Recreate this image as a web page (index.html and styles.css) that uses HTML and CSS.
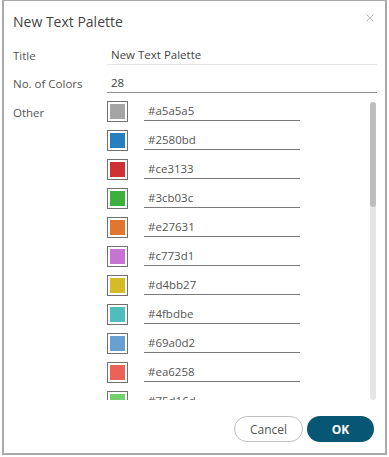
FILE: index.html
```html
<!DOCTYPE html>
<html>
<head>
<meta charset="utf-8">
<link rel="stylesheet" href="styles.css">
</head>
<body>
<div class="dialog">
  <div class="header">
    <span class="title">New Text Palette</span>
    <svg class="close" width="8" height="8" viewBox="0 0 8 8"><path d="M0.5 0.5 L7.5 7.5 M7.5 0.5 L0.5 7.5" stroke="#b8b8b8" stroke-width="1" fill="none"/></svg>
  </div>
  <div class="field field-title">
    <label class="label">Title</label>
    <div class="input input-light">New Text Palette</div>
  </div>
  <div class="field field-count">
    <label class="label">No. of Colors</label>
    <div class="input input-dark">28</div>
  </div>
  <div class="field field-other">
    <label class="label label-other">Other</label>
    <div class="colors-wrap">
      <div class="colors">
        <div class="crow"><span class="swatch"><i style="background:#a5a5a5"></i></span><span class="hex">#a5a5a5</span></div>
        <div class="crow"><span class="swatch"><i style="background:#2580bd"></i></span><span class="hex">#2580bd</span></div>
        <div class="crow"><span class="swatch"><i style="background:#ce3133"></i></span><span class="hex">#ce3133</span></div>
        <div class="crow"><span class="swatch"><i style="background:#3cb03c"></i></span><span class="hex">#3cb03c</span></div>
        <div class="crow"><span class="swatch"><i style="background:#e27631"></i></span><span class="hex">#e27631</span></div>
        <div class="crow"><span class="swatch"><i style="background:#c773d1"></i></span><span class="hex">#c773d1</span></div>
        <div class="crow"><span class="swatch"><i style="background:#d4bb27"></i></span><span class="hex">#d4bb27</span></div>
        <div class="crow"><span class="swatch"><i style="background:#4fbdbe"></i></span><span class="hex">#4fbdbe</span></div>
        <div class="crow"><span class="swatch"><i style="background:#69a0d2"></i></span><span class="hex">#69a0d2</span></div>
        <div class="crow"><span class="swatch"><i style="background:#ea6258"></i></span><span class="hex">#ea6258</span></div>
        <div class="crow"><span class="swatch"><i style="background:#75d16d"></i></span><span class="hex">#75d16d</span></div>
      </div>
      <div class="scrollbar"><div class="thumb"></div></div>
    </div>
  </div>
  <div class="footer">
    <button class="btn btn-cancel">Cancel</button>
    <button class="btn btn-ok">OK</button>
  </div>
</div>
</body>
</html>
```

FILE: styles.css
```css
* { box-sizing: border-box; }
html, body { margin: 0; padding: 0; background: #fff; }
body {
  font-family: "Open Sans", "Liberation Sans", sans-serif;
  color: #555;
  padding-left: 2px;
}
.dialog {
  width: 385px;
  height: 455px;
  border: 2px solid #a9a9a9;
  border-top-width: 1px;
  display: flex;
  flex-direction: column;
  background: #fff;
}
.header {
  height: 42px;
  display: flex;
  align-items: flex-start;
  justify-content: space-between;
  padding: 11px 11px 0 9px;
}
.title {
  font-size: 14px;
  line-height: 20px;
  color: #444;
}
.close { margin-top: 2px; }
.field {
  display: grid;
  grid-template-columns: 94px 1fr;
  padding: 0 8px 0 9px;
  align-items: end;
}
.label {
  font-size: 11.5px;
  color: #555;
  line-height: 19px;
}
.input {
  font-size: 11.5px;
  color: #444;
  padding-left: 4px;
  padding-top: 2px;
  line-height: 19px;
}
.field-title .input { height: 22px; border-bottom: 1px solid #e4e4e4; }
.field-count { margin-top: 7px; }
.field-count .input { height: 21px; border-bottom: 1px solid #8c8c8c; padding-top: 1px; }
.field-other {
  margin-top: 7px;
  align-items: start;
  padding-right: 9px;
}
.label-other { padding-top: 3px; }
.colors-wrap {
  position: relative;
  height: 300px;
}
.colors {
  height: 100%;
  overflow: hidden;
  padding-top: 1px;
}
.scrollbar {
  position: absolute;
  right: 0;
  top: 2px;
  bottom: 0;
  width: 6px;
  background: #e6e6e6;
  border-radius: 3px;
}
.thumb {
  height: 105px;
  background: #bdbdbd;
  border-radius: 3px;
}
.crow {
  display: flex;
  align-items: flex-start;
  height: 29px;
}
.swatch {
  width: 21px;
  height: 21px;
  border: 1px solid #707070;
  padding: 2px;
  background: #fff;
  display: block;
  flex: none;
}
.swatch i { display: block; width: 100%; height: 100%; }
.hex {
  margin-left: 16px;
  width: 156px;
  height: 20px;
  border-bottom: 1px solid #7a7a7a;
  font-size: 11.5px;
  color: #555;
  padding-left: 4px;
  line-height: 19px;
}
.footer {
  display: flex;
  justify-content: flex-end;
  gap: 4px;
  padding: 16px 11px 0 0;
}
.btn {
  height: 26px;
  border-radius: 13px;
  font-family: "Open Sans", "Liberation Sans", sans-serif;
  font-size: 12px;
  cursor: pointer;
}
.btn-cancel {
  width: 69px;
  background: #fff;
  border: 1px solid #bfbfbf;
  color: #555;
}
.btn-ok {
  width: 67px;
  background: #075674;
  border: none;
  color: #fff;
  font-weight: 700;
}
```
